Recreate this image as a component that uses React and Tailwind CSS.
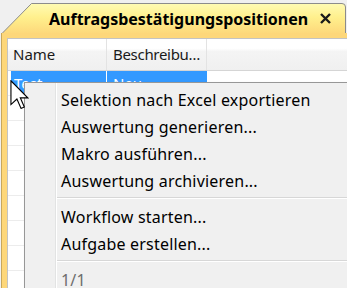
// Context menu over a grid inside a yellow document tab
const MENU_ITEMS = [
  { label: 'Selektion nach Excel exportieren' },
  { label: 'Auswertung generieren...' },
  { label: 'Makro ausführen...' },
  { label: 'Auswertung archivieren...' },
  { sep: true },
  { label: 'Workflow starten...' },
  { label: 'Aufgabe erstellen...' },
  { sep: true },
  { label: '1/1', disabled: true },
];

const ROW_LINES = [1, 2, 3, 4, 5, 6, 7, 8, 9];

function TabShape() {
  return (
    <svg className="absolute inset-0" width="347" height="33" viewBox="0 0 347 33">
      <defs>
        <linearGradient id="tabFill" x1="0" y1="0" x2="0" y2="1">
          <stop offset="0" stopColor="#fffbb4" />
          <stop offset="0.45" stopColor="#fff08d" />
          <stop offset="1" stopColor="#fdd77a" />
        </linearGradient>
      </defs>
      <path d="M1.5 34 L31.5 3.5 H342 Q345.5 3.5 345.5 7 V34" fill="url(#tabFill)" stroke="#8c8c8c" strokeWidth="1" />
    </svg>
  );
}

function Cursor() {
  return (
    <svg className="absolute left-[10px] top-[80px]" width="19" height="29" viewBox="-0.5 -0.5 12.5 19.5">
      <path d="M0 0 L0 16 L4 12.3 L6.8 18.6 L9 17.6 L6.3 11.5 L11.3 11.5 Z" fill="#fff" stroke="#000" strokeWidth="0.75" strokeLinejoin="miter" />
    </svg>
  );
}

export default function App() {
  return (
    <div className="relative w-[347px] h-[288px] overflow-hidden bg-[#f0f0f0]" style={{ fontFamily: '"Noto Sans", "Open Sans", sans-serif' }}>

      {/* Tab header */}
      <div className="relative h-[33px]">
        <TabShape />
        <div className="relative flex items-center h-full pl-[49px] pr-[16px] pt-[4px]">
          <span className="text-[16px] font-bold text-black">Auftragsbestätigungspositionen</span>
          <svg className="ml-auto" width="11" height="11" viewBox="0 0 11 11">
            <path d="M1 1 L10 10 M10 1 L1 10" stroke="#1a1a1a" strokeWidth="2.4" />
          </svg>
        </div>
      </div>

      {/* Yellow frame + grid */}
      <div className="ml-px h-[255px] bg-[#fdd77a] pl-[5px] pt-[5px] border-l border-[#c9a75a]">
        <div className="h-full bg-white border-l border-t border-[#c3c3c3]">

          {/* Column header */}
          <div className="flex h-[32px] text-[15px] text-[#1a1a1a] border-b border-[#d5d5d5] bg-[linear-gradient(#ffffff_0%,#ffffff_30%,#f4f4f4_40%,#f0f0f0_100%)]">
            <div className="w-[99px] flex items-center pl-[5px] border-r border-[#e3e3e3]">Name</div>
            <div className="w-[100px] flex items-center pl-[6px] border-r border-[#e3e3e3] tracking-[-0.3px]">Beschreibu…</div>
            <div className="flex-1" />
          </div>

          {/* Selected row */}
          <div className="flex h-[25px] pl-[3px] border-b border-[#ececec] text-[15px] text-white">
            <div className="w-[96px] flex items-center pl-[3px] bg-[#3399ff] border-r border-white">Test</div>
            <div className="w-[100px] flex items-center pl-[6px] bg-[#3399ff]">Neu</div>
          </div>

          {ROW_LINES.map((i) => (
            <div key={i} className="h-[25px] border-b border-[#ececec]" />
          ))}
        </div>
      </div>

      {/* Context menu */}
      <div className="absolute left-[24px] top-[82px] w-[340px] h-[220px] flex bg-[#f0f0f0] border border-[#979797] shadow-[2px_2px_3px_rgba(0,0,0,0.2)]">
        <div className="w-[31px] border-r border-[#e2e3e3]" />
        <div className="flex-1 flex flex-col pt-[3px] border-l border-white">
          {MENU_ITEMS.map((item, i) =>
            item.sep ? (
              <div key={i} className="h-[9px] pt-[3px]">
                <div className="h-px bg-[#d7d7d7]" />
                <div className="h-px bg-white" />
              </div>
            ) : (
              <div
                key={i}
                className={`h-[27px] flex items-center pl-[4px] text-[16px] tracking-[0.2px] ${item.disabled ? 'text-[#6d6d6d]' : 'text-black'}`}
              >
                {item.label}
              </div>
            )
          )}
        </div>
      </div>

      <Cursor />
    </div>
  );
}
